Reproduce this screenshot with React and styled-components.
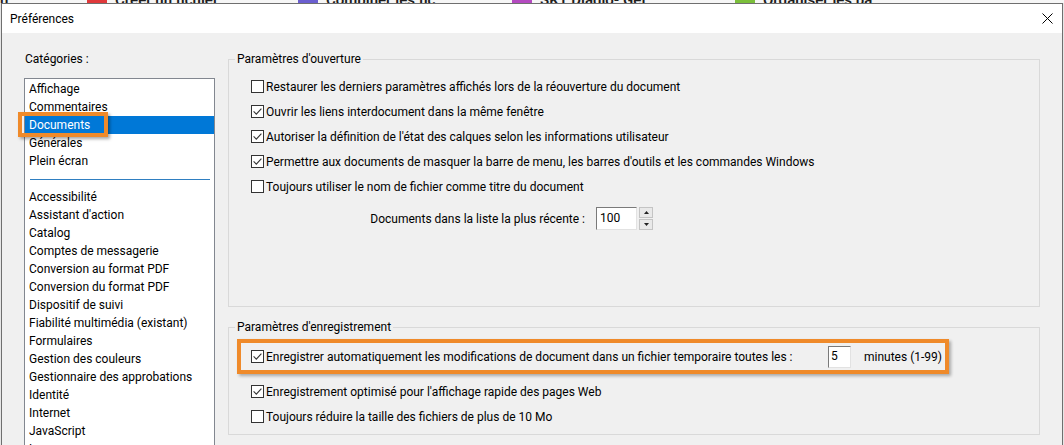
import React from "react";
import styled, { createGlobalStyle } from "styled-components";

const GlobalStyle = createGlobalStyle`
  html, body {
    margin: 0;
    padding: 0;
  }
  body {
    background: #f0f0f0;
    font-family: Roboto, "Noto Sans", "Segoe UI", sans-serif;
    font-size: 12px;
    color: #000;
  }
`;

const ORANGE = "#ef8a2a";

const Page = styled.div`
  width: 1064px;
  height: 445px;
  overflow: hidden;
  display: flex;
  flex-direction: column;
  background: #e6e6e6;
`;

/* Strip of the application window lying behind the dialog */
const Launcher = styled.div`
  height: 3px;
  flex: none;
  overflow: hidden;
  display: flex;
  align-items: flex-end;
  background: #f6f6f6;
`;

const LaunchItem = styled.div`
  flex: none;
  width: ${(p) => p.$w}px;
  display: flex;
  align-items: flex-end;
  gap: 8px;
  margin-bottom: -5px;
`;

const LaunchIcon = styled.span`
  width: 20px;
  height: 16px;
  background: ${(p) => p.$c};
  border-radius: 2px;
`;

const LaunchText = styled.span`
  font-size: 15px;
  line-height: 16px;
  font-weight: 600;
  color: #1e1e1e;
  white-space: nowrap;
`;

const Window = styled.div`
  margin-left: 1px;
  width: 1062px;
  flex: 1;
  box-sizing: border-box;
  border: 1px solid #6f6f6f;
  border-bottom: none;
  background: #f0f0f0;
  display: flex;
  flex-direction: column;
`;

const TitleBar = styled.div`
  height: 29px;
  flex: none;
  background: #fff;
  display: flex;
  align-items: center;
  justify-content: space-between;
  padding: 0 9px 0 8px;
`;

const Title = styled.span`
  font-size: 12px;
  line-height: 16px;
`;

const CloseIcon = styled.svg`
  display: block;
  width: 11px;
  height: 11px;
`;

const Body = styled.div`
  display: flex;
  align-items: flex-start;
  gap: 13px;
  padding: 18px 22px 0 22px;
`;

const Sidebar = styled.div`
  width: 191px;
  flex: none;
  display: flex;
  flex-direction: column;
  gap: 11px;
`;

const SectionLabel = styled.div`
  line-height: 16px;
  padding-left: 1px;
`;

const CategoryList = styled.ul`
  list-style: none;
  margin: 0;
  padding: 1px 0;
  height: 420px;
  background: #fff;
  border: 1px solid #828790;
`;

const CategoryItem = styled.li`
  position: relative;
  height: 18px;
  line-height: 18px;
  padding-left: 4px;
  white-space: nowrap;
  background: ${(p) => (p.$selected ? "#0078d7" : "transparent")};
  color: ${(p) => (p.$selected ? "#fff" : "#000")};

  ${(p) =>
    p.$marked &&
    `
    &::after {
      content: "";
      position: absolute;
      left: -7px;
      top: -4px;
      width: 90px;
      height: 25px;
      box-sizing: border-box;
      border: 4px solid ${ORANGE};
      box-shadow: 2px 2px 3px rgba(0, 0, 0, 0.35);
    }
  `}
`;

const CategorySeparator = styled.li`
  height: 18px;
  display: flex;
  align-items: center;
  padding: 0 4px 0 5px;

  &::before {
    content: "";
    flex: 1;
    height: 1px;
    background: #2f7fc1;
  }
`;

const Content = styled.div`
  width: 812px;
  flex: none;
  display: flex;
  flex-direction: column;
  gap: 12px;
`;

const Group = styled.fieldset`
  margin: 0;
  padding: 0;
  min-width: 0;
  box-sizing: border-box;
  height: ${(p) => p.$h}px;
  border: 1px solid #d9d9d9;
`;

const Legend = styled.legend`
  margin-left: 6px;
  padding: 0 2px;
  line-height: 16px;
`;

const GroupBody = styled.div`
  display: flex;
  flex-direction: column;
  align-items: flex-start;
  padding: ${(p) => p.$top}px 0 0 22px;
`;

const OptionRow = styled.label`
  display: flex;
  align-items: center;
  gap: 2px;
  height: 25px;
  white-space: nowrap;
  margin-top: ${(p) => p.$gap || 0}px;
`;

const FocusRow = styled.div`
  display: flex;
  align-items: center;
  box-sizing: border-box;
  width: 712px;
  height: 35px;
  margin-left: -14px;
  padding: 0 0 0 10px;
  border: 4px solid ${ORANGE};
  box-shadow: 2px 2px 3px rgba(0, 0, 0, 0.3);
  white-space: nowrap;
`;

const FocusLabel = styled.label`
  flex: 1;
  display: flex;
  align-items: center;
  gap: 2px;
`;

const BoxFrame = styled.span`
  width: 13px;
  height: 13px;
  box-sizing: border-box;
  border: 1px solid #333;
  background: #fff;
  display: flex;
  align-items: center;
  justify-content: center;
  flex: none;
`;

const Checkbox = ({ checked }) => (
  <BoxFrame>
    {checked && (
      <svg width="11" height="11" viewBox="0 0 11 11">
        <path d="M1.6 5.4 L4.3 8.1 L9.4 2.6" fill="none" stroke="#333" strokeWidth="1.1" />
      </svg>
    )}
  </BoxFrame>
);

const FieldRow = styled.div`
  display: flex;
  align-items: center;
  margin-top: 8px;
  height: 23px;
`;

const FieldLabel = styled.span`
  width: 334px;
  text-align: right;
  margin-right: 11px;
  white-space: nowrap;
`;

const NumberBox = styled.div`
  box-sizing: border-box;
  width: ${(p) => p.$w}px;
  height: ${(p) => p.$h}px;
  padding-left: ${(p) => p.$pad}px;
  border: 1px solid;
  border-color: #7a7a7a #e2e2e2 #e2e2e2 #7a7a7a;
  background: #fff;
  line-height: ${(p) => p.$h - 3}px;
  flex: none;
`;

const Spinner = styled.div`
  margin-left: 2px;
  width: 14px;
  height: 23px;
  display: flex;
  flex-direction: column;
  gap: 1px;
`;

const SpinButton = styled.div`
  flex: 1;
  box-sizing: border-box;
  border: 1px solid #c4c4c4;
  background: #e9e9e9;
  display: flex;
  align-items: center;
  justify-content: center;
`;

const Arrow = ({ down }) => (
  <svg width="5" height="3" viewBox="0 0 5 3">
    <path d={down ? "M0 0 H5 L2.5 3 Z" : "M0 3 H5 L2.5 0 Z"} fill="#222" />
  </svg>
);

const Unit = styled.span`
  width: 81px;
  margin-left: 13px;
  flex: none;
`;

const launchers = [
  { w: 87, text: "n...", color: null },
  { w: 211, text: "Créer un fichier ...", color: "#e0393b" },
  { w: 214, text: "Combiner les fic...", color: "#6b5fd0" },
  { w: 223, text: "SKT Diadio- Get...", color: "#b44ac0" },
  { w: 240, text: "Organiser les pa...", color: "#7bbf3a" },
];

const categories = [
  "Affichage",
  "Commentaires",
  "Documents",
  "Générales",
  "Plein écran",
  null,
  "Accessibilité",
  "Assistant d'action",
  "Catalog",
  "Comptes de messagerie",
  "Conversion au format PDF",
  "Conversion du format PDF",
  "Dispositif de suivi",
  "Fiabilité multimédia (existant)",
  "Formulaires",
  "Gestion des couleurs",
  "Gestionnaire des approbations",
  "Identité",
  "Internet",
  "JavaScript",
  "Langues",
  "Mesure (2D)",
];

const openOptions = [
  { label: "Restaurer les derniers paramètres affichés lors de la réouverture du document", checked: false },
  { label: "Ouvrir les liens interdocument dans la même fenêtre", checked: true },
  { label: "Autoriser la définition de l'état des calques selon les informations utilisateur", checked: true },
  { label: "Permettre aux documents de masquer la barre de menu, les barres d'outils et les commandes Windows", checked: true },
  { label: "Toujours utiliser le nom de fichier comme titre du document", checked: false },
];

export default function App() {
  return (
    <>
      <GlobalStyle />
      <Page>
        <Launcher>
          {launchers.map((l) => (
            <LaunchItem key={l.text} $w={l.w}>
              {l.color && <LaunchIcon $c={l.color} />}
              <LaunchText>{l.text}</LaunchText>
            </LaunchItem>
          ))}
        </Launcher>

        <Window>
          <TitleBar>
            <Title>Préférences</Title>
            <CloseIcon viewBox="0 0 11 11">
              <path d="M0.5 0.5 L10.5 10.5 M10.5 0.5 L0.5 10.5" stroke="#000" strokeWidth="1" />
            </CloseIcon>
          </TitleBar>

          <Body>
            <Sidebar>
              <SectionLabel>Catégories :</SectionLabel>
              <CategoryList>
                {categories.map((c, i) =>
                  c === null ? (
                    <CategorySeparator key={`sep-${i}`} />
                  ) : (
                    <CategoryItem key={c} $selected={c === "Documents"} $marked={c === "Documents"}>
                      {c}
                    </CategoryItem>
                  )
                )}
              </CategoryList>
            </Sidebar>

            <Content>
              <Group $h={256}>
                <Legend>Paramètres d'ouverture</Legend>
                <GroupBody $top={7}>
                  {openOptions.map((o) => (
                    <OptionRow key={o.label}>
                      <Checkbox checked={o.checked} />
                      {o.label}
                    </OptionRow>
                  ))}
                  <FieldRow>
                    <FieldLabel>Documents dans la liste la plus récente :</FieldLabel>
                    <NumberBox $w={41} $h={23} $pad={3}>100</NumberBox>
                    <Spinner>
                      <SpinButton>
                        <Arrow />
                      </SpinButton>
                      <SpinButton>
                        <Arrow down />
                      </SpinButton>
                    </Spinner>
                  </FieldRow>
                </GroupBody>
              </Group>

              <Group $h={116}>
                <Legend>Paramètres d'enregistrement</Legend>
                <GroupBody $top={4}>
                  <FocusRow>
                    <FocusLabel>
                      <Checkbox checked />
                      Enregistrer automatiquement les modifications de document dans un fichier temporaire toutes les :
                    </FocusLabel>
                    <NumberBox $w={23} $h={22} $pad={2}>5</NumberBox>
                    <Unit>minutes (1-99)</Unit>
                  </FocusRow>
                  <OptionRow $gap={5}>
                    <Checkbox checked />
                    Enregistrement optimisé pour l'affichage rapide des pages Web
                  </OptionRow>
                  <OptionRow>
                    <Checkbox />
                    Toujours réduire la taille des fichiers de plus de 10 Mo
                  </OptionRow>
                </GroupBody>
              </Group>
            </Content>
          </Body>
        </Window>
      </Page>
    </>
  );
}
